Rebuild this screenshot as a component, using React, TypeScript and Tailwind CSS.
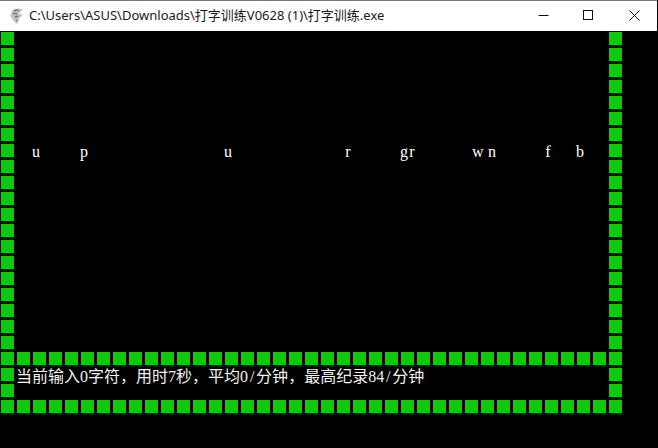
import React from 'react';

const Cell: React.FC = () => (
  <div className="h-4 w-4 p-px shrink-0">
    <div className="h-[13px] w-[13px] bg-[#10c90d]" />
  </div>
);

const Row: React.FC<{ count: number }> = ({ count }) => (
  <div className="flex">
    {Array.from({ length: count }).map((_, i) => (
      <Cell key={i} />
    ))}
  </div>
);

const Column: React.FC<{ count: number }> = ({ count }) => (
  <div className="flex flex-col">
    {Array.from({ length: count }).map((_, i) => (
      <Cell key={i} />
    ))}
  </div>
);

// falling letters, one console column is 8px
const letters =
  '  u' + ' '.repeat(5) + 'p' + ' '.repeat(17) + 'u' + ' '.repeat(14) + 'r' + ' '.repeat(6) + 'gr' + ' '.repeat(7) + 'w n' + ' '.repeat(6) + 'f' + ' '.repeat(3) + 'b';

const COMMA = '\uFF0C';

// half width console character
const Half: React.FC<{ children: React.ReactNode }> = ({ children }) => (
  <span className="inline-block w-2 text-center font-['Liberation_Serif',serif]">{children}</span>
);

export default function App() {
  return (
    <div className="flex h-[448px] w-[658px] flex-col overflow-hidden bg-black">
      {/* title bar */}
      <div className="flex h-[31px] w-[657px] shrink-0 items-center border-t border-[#7a7a7a] bg-white pb-px">
        <svg width="15" height="16" viewBox="0 0 15 16" className="ml-[9px] shrink-0">
          <path d="M3 3 C5 0 11 0 14 2 C12 3 11 4 10 6 C12 6 13 6 14 7 C12 8 11 9 10 11 C10 13 9 15 7 16 C6 13 3 12 2 9 C1 7 2 5 3 3Z" fill="#c4c4c4" />
          <path d="M5 3 C7 2 9 2 10 3 M4 6 C5 5 7 5 8 6 M6 9 C7 8 8 8 9 9 M7 12 L8 13" stroke="#6a6a6a" strokeWidth="1.2" fill="none" />
        </svg>
        <span className="ml-[5px] whitespace-pre font-['Noto_Sans','Noto_Sans_CJK_SC',sans-serif] text-[13px] text-[#1a1a1a]">
          {'C:\\Users\\ASUS\\Downloads\\打字训练V0628 (1)\\打字训练.exe'}
        </span>
        <div className="ml-auto flex">
          <div className="flex h-[29px] w-[45px] items-center justify-center">
            <svg width="11" height="11" viewBox="0 0 11 11">
              <path d="M0.5 5.5H10.5" stroke="#111" strokeWidth="1" />
            </svg>
          </div>
          <div className="flex h-[29px] w-[45px] items-center justify-center">
            <svg width="11" height="11" viewBox="0 0 11 11">
              <rect x="0.5" y="0.5" width="9" height="9" fill="none" stroke="#111" strokeWidth="1" />
            </svg>
          </div>
          <div className="flex h-[29px] w-[46px] items-center justify-center">
            <svg width="11" height="11" viewBox="0 0 11 11">
              <path d="M0.5 0.5L10.5 10.5M10.5 0.5L0.5 10.5" stroke="#111" strokeWidth="1" />
            </svg>
          </div>
        </div>
      </div>

      {/* console */}
      <div className="flex flex-col">
        <div className="flex">
          <Column count={20} />
          <div className="w-[592px] pt-[112px]">
            <div className="flex h-4 text-base leading-4 text-white">
              {letters.split('').map((ch, i) =>
                ch === ' ' ? <div key={i} className="w-2 shrink-0" /> : <div key={i} className="w-2 shrink-0"><Half>{ch}</Half></div>,
              )}
            </div>
          </div>
          <Column count={20} />
        </div>
        <Row count={39} />
        <div className="flex">
          <Cell />
          <div className="h-4 w-[592px] whitespace-pre font-['Noto_Sans_CJK_SC',sans-serif] text-base leading-4 text-[#f2f2f2]">
            当前输入<Half>0</Half>字符{COMMA}用时<Half>7</Half>秒{COMMA}平均<Half>0</Half><Half>/</Half>分钟{COMMA}最高纪录<Half>8</Half><Half>4</Half><Half>/</Half>分钟
          </div>
          <Cell />
        </div>
        <div className="flex">
          <Cell />
          <div className="w-[592px]" />
          <Cell />
        </div>
        <Row count={39} />
      </div>
    </div>
  );
}
